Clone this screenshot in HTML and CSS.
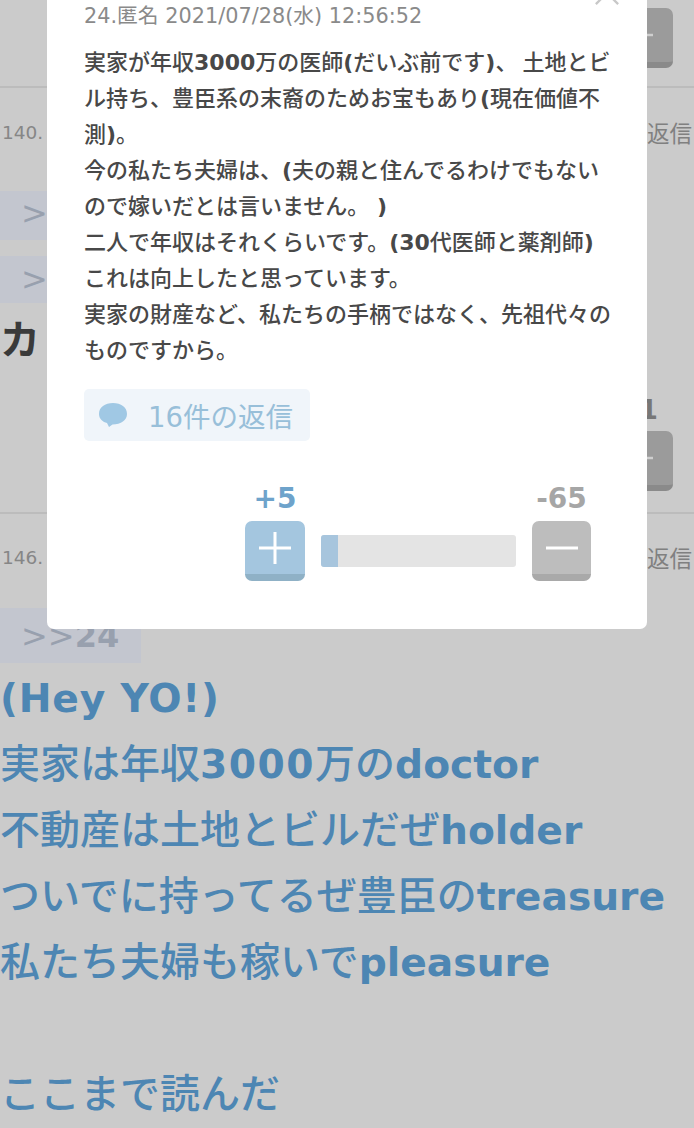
FILE: index.html
```html
<!DOCTYPE html>
<html lang="ja">
<head>
<meta charset="utf-8">
<title>コメント</title>
<link rel="stylesheet" href="styles.css">
</head>
<body>
<main class="page">
  <section class="comment comment-first">
    <div class="vote">
      <div class="vote-btn vote-btn-bg"><svg class="vote-icon" viewBox="0 0 30 30"><path d="M6 15H24"/></svg></div>
    </div>
  </section>
  <section class="comment comment-second">
    <header class="comment-head"><span class="num">140.</span><span class="reply">返信</span></header>
    <div class="quote quote-short">&gt;</div>
    <div class="quote quote-short quote-second">&gt;</div>
    <p class="comment-text comment-dark">カ</p>
    <div class="vote">
      <div class="vote-count">-1</div>
      <div class="vote-btn vote-btn-bg"><svg class="vote-icon" viewBox="0 0 30 30"><path d="M6 15H24"/></svg></div>
    </div>
  </section>
  <section class="comment comment-third">
    <header class="comment-head"><span class="num">146.</span><span class="reply">返信</span></header>
    <div class="quote quote-long">&gt;&gt;<b>24</b></div>
    <p class="comment-text comment-blue"><b class="spaced">(Hey YO!)</b><br>実家は年収<b class="digits">3000</b>万の<b>doctor</b><br>不動産は土地とビルだぜ<b>holder</b><br>ついでに持ってるぜ豊臣の<b>treasure</b><br>私たち夫婦も稼いで<b>pleasure</b><br><br>ここまで読んだ</p>
  </section>

  <aside class="modal">
    <svg class="modal-close" viewBox="0 0 28 28"><path d="M2 2L26 26M26 2L2 26"/></svg>
    <div class="modal-head">24.匿名 2021/07/28(水) 12:56:52</div>
    <p class="modal-text">実家が年収<b>3000</b>万の医師<b>(</b>だいぶ前です<b>)</b><span class="comma">、</span>土地とビ<br>ル持ち、豊臣系の末裔のためお宝もあり<b>(</b>現在価値不<br>測<b>)</b>。<br>今の私たち夫婦は、<b>(</b>夫の親と住んでるわけでもない<br>ので嫁いだとは言いません。<b> )</b><br>二人で年収はそれくらいです。<b>(30</b>代医師と薬剤師<b>)</b><br>これは向上したと思っています。<br>実家の財産など、私たちの手柄ではなく、先祖代々の<br>ものですから。</p>
    <div class="chip">
      <svg class="chip-icon" viewBox="0 0 30 26"><path d="M15 1C7 1 1 5 1 12C1 17 5 20 9 21L11 25L14.500 22.500C23 22.500 29 18 29 12C29 5 23 1 15 1Z"/></svg>
      <span>16件の返信</span>
    </div>
    <div class="rating">
      <div class="rating-count rating-plus">+5</div>
      <div></div>
      <div class="rating-count rating-minus">-65</div>
      <div class="rating-btn rating-btn-plus"><svg class="rating-icon" viewBox="0 0 32 32"><path d="M16 0V32M0 16H32"/></svg></div>
      <div class="bar"><div class="bar-fill"></div></div>
      <div class="rating-btn rating-btn-minus"><svg class="rating-icon" viewBox="0 0 32 32"><path d="M0 16H32"/></svg></div>
    </div>
  </aside>
</main>
</body>
</html>
```
FILE: styles.css
```css
* { box-sizing: border-box; }
html, body { margin: 0; padding: 0; }
body {
  width: 694px;
  height: 1128px;
  overflow: hidden;
  background: #cbcbcb;
  font-family: "DejaVu Sans", "Noto Sans CJK JP", sans-serif;
}
p { margin: 0; }
.page {
  position: relative;
  width: 694px;
  height: 1128px;
  overflow: hidden;
}
.comment {
  display: flex;
  flex-direction: column;
  border-bottom: 2px solid #bcbcbc;
}
.comment-first {
  height: 88px;
  padding: 8px 21px 0 0;
}
.comment-second {
  height: 426px;
  padding-top: 22px;
}
.comment-third {
  padding-top: 21px;
  border-bottom: 0;
}
.comment-head {
  display: flex;
  justify-content: space-between;
  align-items: center;
  height: 44px;
  padding: 0 2px;
  color: #868686;
}
.num { font-size: 18.500px; }
.reply { font-size: 22.500px; color: #808080; }
.quote {
  background: #c3c6cf;
  color: #98a0ae;
  font-size: 32px;
  padding-left: 21px;
}
.quote b { font-weight: 700; }
.quote-short {
  width: 60px;
  height: 49px;
  margin-top: 37px;
  line-height: 44px;
}
.quote-second {
  height: 47px;
  margin-top: 16px;
  line-height: 46px;
}
.quote-long {
  width: 141px;
  height: 55px;
  margin-top: 29px;
  line-height: 56px;
}
.comment-text {
  font-size: 40px;
  line-height: 66px;
  margin-top: 2px;
  white-space: nowrap;
}
.comment-dark { margin-top: 4px; color: #3a3a3a; font-weight: 700; }
.comment-blue { color: #4d86b3; font-weight: 500; }
.comment-blue b { font-weight: 700; font-size: 39.200px; line-height: 1; }
.comment-blue .spaced { letter-spacing: 0.800px; }
.comment-blue .digits { letter-spacing: 1.500px; }
.vote {
  align-self: flex-end;
  display: flex;
  flex-direction: column;
  align-items: center;
  width: 59px;
}
.comment-second .vote { margin: 22px 21px 0 0; }
.vote-count {
  height: 30px;
  margin-bottom: 6px;
  font-size: 26px;
  line-height: 30px;
  font-weight: 700;
  color: #777;
}
.vote-btn {
  display: flex;
  align-items: center;
  justify-content: center;
  width: 59px;
  height: 60px;
  border-radius: 7px;
}
.vote-btn-bg {
  background: #9b9b9b;
  border-bottom: 6px solid #8a8a8a;
}
.vote-icon {
  width: 30px;
  height: 30px;
  fill: none;
  stroke: #cfcfcf;
  stroke-width: 2.500;
}
.modal {
  position: absolute;
  left: 47px;
  top: -40px;
  width: 600px;
  height: 669px;
  padding: 38px 37px 0;
  background: #fff;
  border-radius: 7px;
}
.modal-close {
  position: absolute;
  top: 20px;
  right: 27px;
  width: 26px;
  height: 26px;
  fill: none;
  stroke: #c8c8c8;
  stroke-width: 2.500;
}
.modal-head {
  font-size: 20.800px;
  line-height: 36px;
  color: #8a8a8a;
  white-space: nowrap;
}
.modal-text {
  margin-top: 11px;
  font-size: 22px;
  line-height: 36px;
  font-weight: 500;
  color: #484848;
  white-space: pre;
}
.modal-text b { font-weight: 700; }
.comma { margin-right: 5px; }
.chip {
  display: inline-flex;
  align-items: center;
  gap: 20px;
  width: 226px;
  height: 52px;
  margin-top: 20px;
  padding-left: 14px;
  background: #f0f5fa;
  border-radius: 5px;
  color: #98bfd9;
  font-size: 27.500px;
  white-space: nowrap;
}
.chip-icon {
  flex: none;
  width: 30px;
  height: 26px;
  fill: #a0c8e4;
}
.rating {
  display: grid;
  grid-template-columns: 60px 195px 59px;
  column-gap: 16px;
  row-gap: 7px;
  align-items: center;
  width: 346px;
  margin: 43px 0 0 161px;
}
.rating-count {
  height: 30px;
  font-size: 28px;
  line-height: 30px;
  font-weight: 700;
  text-align: center;
}
.rating-plus { color: #6ea3cb; }
.rating-minus { color: #a6a6a6; }
.rating-btn {
  display: flex;
  align-items: center;
  justify-content: center;
  height: 60px;
  padding-top: 1px;
  border-radius: 7px;
}
.rating-btn-plus {
  background: #a4c6df;
  border-bottom: 7px solid #8fb1c6;
}
.rating-btn-minus {
  background: #bdbdbd;
  border-bottom: 7px solid #a9a9a9;
}
.rating-icon {
  width: 32px;
  height: 32px;
  fill: none;
  stroke: #fff;
  stroke-width: 3;
}
.bar {
  height: 32px;
  background: #e4e4e4;
  border-radius: 3px;
  overflow: hidden;
}
.bar-fill {
  width: 17px;
  height: 100%;
  background: #a7c5dd;
}
```
